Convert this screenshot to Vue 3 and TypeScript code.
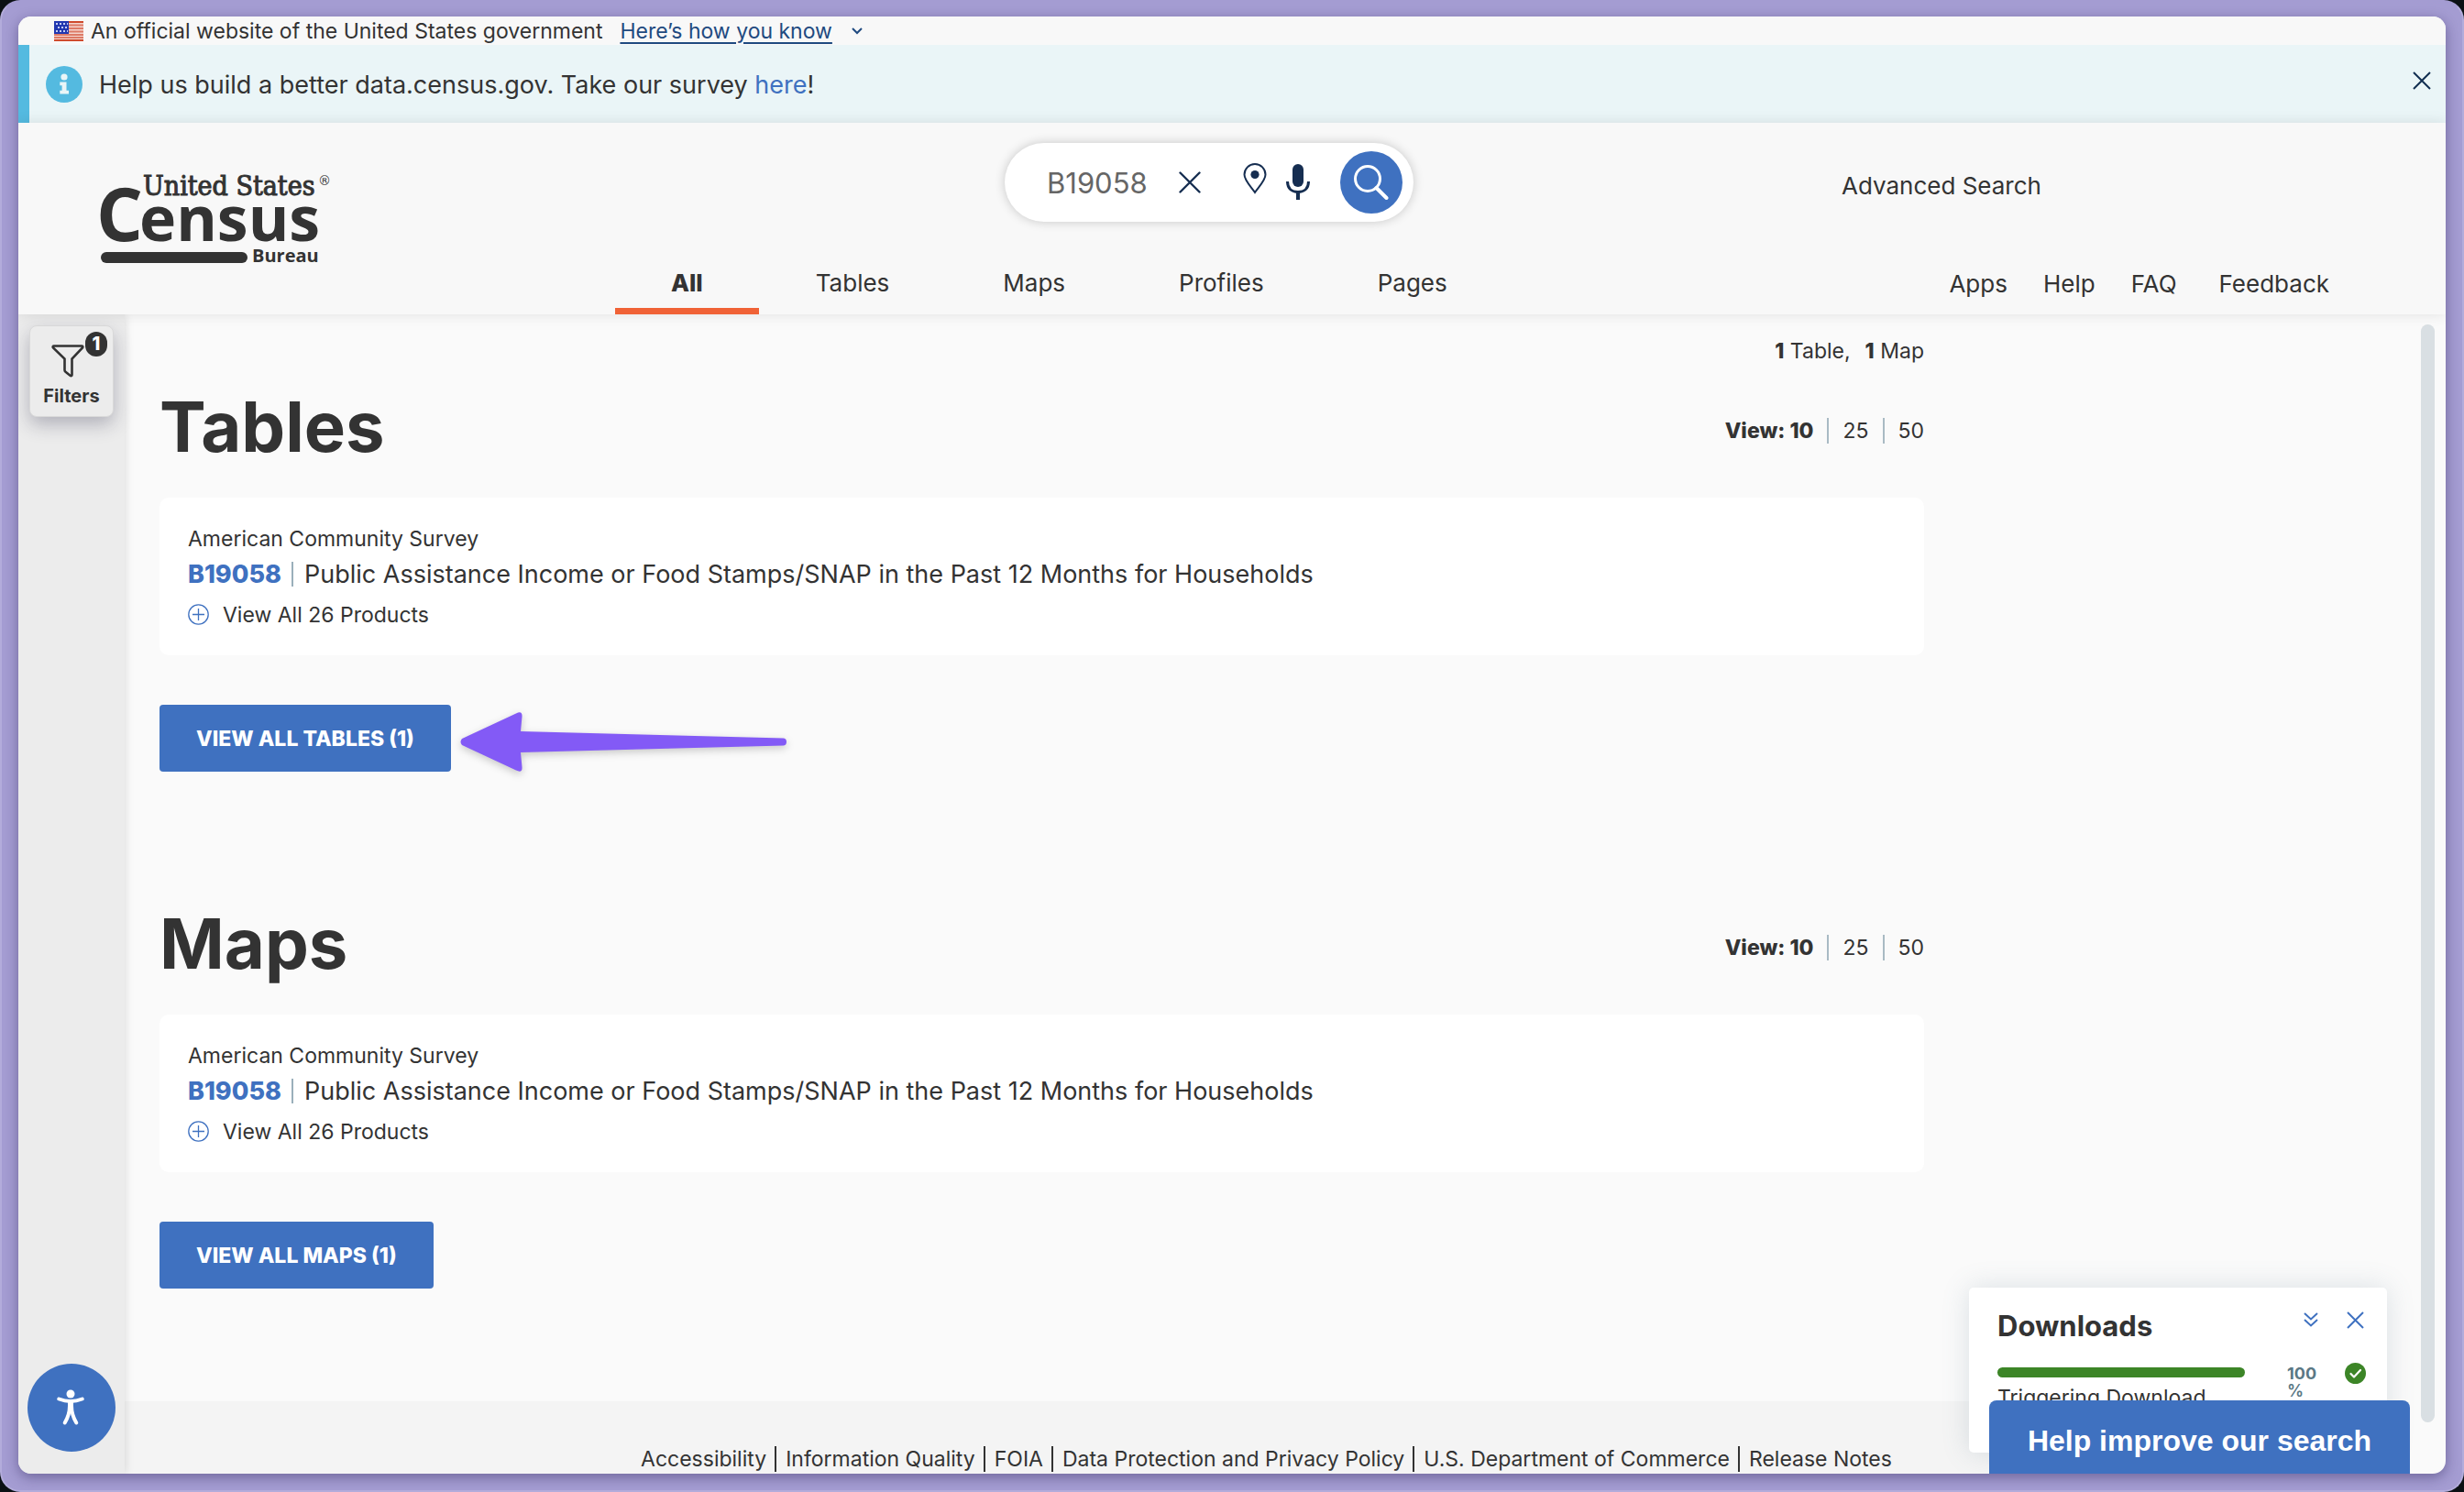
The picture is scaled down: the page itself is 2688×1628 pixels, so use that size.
<script setup lang="ts">
import { ref } from 'vue'

interface ResultSection {
  id: string
  title: string
  action: string
  annotated: boolean
}

const tabs: string[] = ['All', 'Tables', 'Maps', 'Profiles', 'Pages']
const utilityLinks: string[] = ['Apps', 'Help', 'FAQ', 'Feedback']
const pageSizes: number[] = [25, 50]
const footerLinks: string[] = [
  'Accessibility',
  'Information Quality',
  'FOIA',
  'Data Protection and Privacy Policy',
  'U.S. Department of Commerce',
  'Release Notes',
]
const sections: ResultSection[] = [
  { id: 'tables', title: 'Tables', action: 'VIEW ALL TABLES (1)', annotated: true },
  { id: 'maps', title: 'Maps', action: 'VIEW ALL MAPS (1)', annotated: false },
]

const activeTab = ref('All')
const query = ref('B19058')
const progress = ref(100)
</script>

<template>
  <div class="desktop">
    <div class="window">
      <div class="gov-banner">
        <svg class="flag" viewBox="0 0 32 22" aria-hidden="true">
          <rect width="32" height="22" fill="#f5d5cd" />
          <path d="M0 1h32M0 4.5h32M0 8h32M0 11.5h32M0 15h32M0 18h32" stroke="#dd7a66" stroke-width="1.8" />
          <path d="M0 1h32M0 21h32" stroke="#cf4a2c" stroke-width="2" />
          <rect width="16" height="14" fill="#2138b0" />
          <path d="M2 3h13M4 7h11M2 11h13" stroke="#c5cdf2" stroke-width="2" stroke-dasharray="2 2" />
        </svg>
        <span>An official website of the United States government</span>
        <a href="#" class="gov-link">Here’s how you know</a>
        <svg class="gov-chevron" viewBox="0 0 12 8" aria-hidden="true">
          <path d="M1 1l5 5 5-5" fill="none" stroke="#1f4a80" stroke-width="2" />
        </svg>
      </div>

      <div class="alert" role="status">
        <svg class="alert-icon" viewBox="0 0 40 40" aria-hidden="true">
          <circle cx="20" cy="20" r="20" fill="#54bae0" />
          <circle cx="20" cy="12" r="3.6" fill="#eaf5f7" />
          <path d="M15.300 17.500h7.200v9.300h2.500v3.700h-9.700v-3.700h2.300v-5.600h-2.300z" fill="#eaf5f7" />
        </svg>
        <p>Help us build a better data.census.gov. Take our survey <a href="#">here</a>!</p>
        <button type="button" class="icon-button" aria-label="Dismiss">
          <svg width="20" height="20" viewBox="0 0 20 20">
            <path d="M1 1l18 18M19 1L1 19" stroke="#112e51" stroke-width="2" />
          </svg>
        </button>
      </div>

      <header class="header">
        <a href="#" class="logo" aria-label="United States Census Bureau">
          <svg width="252" height="100" viewBox="0 0 252 100" fill="#333">
            <text x="48" y="25" class="logo-top">United States</text>
            <text x="239" y="14" class="logo-mark">®</text>
            <text x="-3" y="75" class="logo-initial">C</text>
            <text x="44" y="75" class="logo-name">ensus</text>
            <rect x="2" y="87" width="160" height="12" rx="6" />
            <text x="167" y="98" class="logo-bureau">Bureau</text>
          </svg>
        </a>

        <form class="search" role="search" @submit.prevent>
          <input v-model="query" type="text" class="search-input" aria-label="Search" />
          <button type="button" class="icon-button clear" aria-label="Clear" @click="query = ''">
            <svg width="24" height="24" viewBox="0 0 24 24">
              <path d="M1.500 1.500l21 21M22.500 1.500l-21 21" stroke="#162e51" stroke-width="2.400" stroke-linecap="round" />
            </svg>
          </button>
          <button type="button" class="icon-button pin" aria-label="Location">
            <svg width="26" height="34" viewBox="0 0 26 34">
              <path d="M13 32C9.500 26.500 1.500 19 1.500 12.500a11.500 11.500 0 0 1 23 0C24.500 19 16.500 26.500 13 32z" fill="none" stroke="#162e51" stroke-width="2" />
              <circle cx="13" cy="12.500" r="4.600" fill="#162e51" />
            </svg>
          </button>
          <button type="button" class="icon-button mic" aria-label="Voice search">
            <svg width="26" height="40" viewBox="0 0 26 40">
              <rect x="7" y="0" width="12" height="25" rx="6" fill="#162e51" />
              <path d="M1.500 19c0 8 5 11.500 11.500 11.500S24.500 27 24.500 19" fill="none" stroke="#162e51" stroke-width="3" />
              <path d="M13 30v9" stroke="#162e51" stroke-width="4" />
            </svg>
          </button>
          <button type="submit" class="search-submit" aria-label="Search">
            <svg width="38" height="38" viewBox="0 0 38 38" fill="none" stroke="#fff">
              <circle cx="15" cy="15" r="13.500" stroke-width="3" />
              <path d="M24.500 25l11 11" stroke-width="4" stroke-linecap="round" />
            </svg>
          </button>
        </form>

        <a href="#" class="advanced">Advanced Search</a>

        <nav class="tabs" aria-label="Result types">
          <button
            v-for="tab in tabs"
            :key="tab"
            type="button"
            class="tab"
            :class="{ active: tab === activeTab }"
            @click="activeTab = tab"
          >
            {{ tab }}
          </button>
        </nav>

        <nav class="utility" aria-label="Utility">
          <a v-for="link in utilityLinks" :key="link" href="#">{{ link }}</a>
        </nav>
      </header>

      <div class="body">
        <aside class="sidebar">
          <button type="button" class="filters">
            <svg width="36" height="36" viewBox="0 0 36 36" aria-hidden="true">
              <path
                d="M2.500 1.500h31c1 0 1 1.200.500 2L22.500 15.500v17.500c0 1.200-1 1.500-2 .800l-5-4c-.800-.600-1-1.200-1-2V15.500L2 3.500c-.600-.800-.500-2 .500-2z"
                fill="none"
                stroke="#333"
                stroke-width="2.600"
              />
            </svg>
            <span>Filters</span>
            <span class="badge">1</span>
          </button>
          <button type="button" class="a11y" aria-label="Accessibility options">
            <svg width="30" height="40" viewBox="0 0 30 40" fill="none" stroke="#fff" stroke-linecap="round" stroke-linejoin="round">
              <circle cx="15" cy="5" r="4.500" fill="#fff" stroke="none" />
              <path d="M2.300 10.500c8 3 17.400 3 25.400 0" stroke-width="4" />
              <path d="M15 14v10" stroke-width="6" stroke-linecap="butt" />
              <path d="M14 18c0 8-2 13-5.300 18.500M16 18c0 8 2 13 5.300 18.500" stroke-width="4" />
            </svg>
          </button>
        </aside>

        <div class="content">
          <main class="results">
            <p class="counts"><span><b>1</b> Table,</span><span><b>1</b> Map</span></p>

            <section v-for="section in sections" :key="section.id" class="section">
              <div class="section-head">
                <h2>{{ section.title }}</h2>
                <div class="page-size">
                  <b>View: 10</b>
                  <a v-for="size in pageSizes" :key="size" href="#">{{ size }}</a>
                </div>
              </div>
              <article class="card">
                <p class="survey">American Community Survey</p>
                <h3>
                  <a href="#">B19058</a>
                  <span>Public Assistance Income or Food Stamps/SNAP in the Past 12 Months for Households</span>
                </h3>
                <button type="button" class="products">
                  <svg width="23" height="23" viewBox="0 0 23 23" fill="none" stroke="#3f71c0" stroke-width="1.300" aria-hidden="true">
                    <circle cx="11.500" cy="11.500" r="10.700" />
                    <path d="M11.500 5v13M5 11.500h13" />
                  </svg>
                  View All 26 Products
                </button>
              </article>
              <div class="action-row">
                <button type="button" class="view-all">{{ section.action }}</button>
                <svg v-if="section.annotated" class="arrow" viewBox="0 0 358 72" aria-hidden="true">
                  <path
                    d="M3 36 Q0 39.500 3 43 L62 70.500 Q69 74 68.500 67 L67 51 L354 43.500 Q357 43 357 39.500 Q357 36 354 35.500 L67 28 L68.500 12 Q69 5 62 8.500 Z"
                    fill="#835af6"
                  />
                </svg>
              </div>
            </section>
          </main>

          <footer class="footer">
            <a v-for="link in footerLinks" :key="link" href="#">{{ link }}</a>
          </footer>
        </div>

        <div class="scroll-track"><div class="scroll-thumb"></div></div>
      </div>

      <section class="downloads" aria-label="Downloads">
        <div class="downloads-head">
          <h4>Downloads</h4>
          <button type="button" class="icon-button" aria-label="Collapse">
            <svg width="16" height="16" viewBox="0 0 16 16" fill="none" stroke="#3f71c0" stroke-width="2">
              <path d="M1 1l7 6.500L15 1M1 8l7 6.500L15 8" />
            </svg>
          </button>
          <button type="button" class="icon-button" aria-label="Close">
            <svg width="19" height="19" viewBox="0 0 19 19">
              <path d="M1 1l17 17M18 1L1 18" stroke="#3f71c0" stroke-width="2" />
            </svg>
          </button>
        </div>
        <div class="downloads-row">
          <div class="download-item">
            <div class="bar"><div class="bar-fill" :style="{ width: progress + '%' }"></div></div>
            <span>Triggering Download</span>
          </div>
          <div class="percent"><b>{{ progress }}</b> %</div>
          <svg width="23" height="23" viewBox="0 0 23 23" aria-hidden="true">
            <circle cx="11.500" cy="11.500" r="11.500" fill="#3c8527" />
            <path d="M6.500 12l3.500 3.500 7-7.500" fill="none" stroke="#fff" stroke-width="2.200" stroke-linecap="round" stroke-linejoin="round" />
          </svg>
        </div>
      </section>
      <button type="button" class="improve">Help improve our search</button>
    </div>
  </div>
</template>

<style>
body {
  background: #0b1014;
}
</style>

<style scoped>
.desktop {
  box-sizing: border-box;
  height: 100vh;
  padding: 16px 18px 18px;
  border: 2px solid #b3acdb;
  border-top-color: #a49cd2;
  border-radius: 22px;
  background: #a49cd2;
  font-family: Inter, "Liberation Sans", sans-serif;
  font-size: 23px;
  color: #333;
}
.desktop *,
.desktop *::before {
  box-sizing: border-box;
}
.window {
  position: relative;
  display: flex;
  flex-direction: column;
  height: 100%;
  overflow: hidden;
  border-radius: 14px;
  background: #fafafa;
  box-shadow: 0 4px 14px rgba(30, 20, 70, 0.4);
}
p,
h2,
h3,
h4 {
  margin: 0;
}
a {
  color: inherit;
  text-decoration: none;
}
button {
  padding: 0;
  border: 0;
  background: none;
  color: inherit;
  font: inherit;
  cursor: pointer;
}
.icon-button {
  display: flex;
}

.gov-banner {
  display: flex;
  align-items: center;
  height: 31px;
  padding-left: 39px;
  background: #f8f8f8;
}
.flag {
  width: 32px;
  height: 22px;
  margin-right: 8px;
}
.gov-link {
  margin: 0 21px 0 19px;
  color: #1f4a80;
  text-decoration: underline;
  text-decoration-thickness: 2px;
  text-underline-offset: 4px;
}
.gov-chevron {
  width: 12px;
  height: 8px;
}

.alert {
  display: flex;
  align-items: center;
  height: 85px;
  padding: 0 16px 0 18px;
  border-left: 12px solid #54bae0;
  background: #eaf5f7;
  font-size: 27px;
}
.alert-icon {
  width: 40px;
  height: 40px;
  margin-right: 18px;
}
.alert p {
  flex: 1;
  padding-top: 2px;
}
.alert a {
  color: #3f71c0;
}
.alert .icon-button {
  padding-bottom: 8px;
}

.header {
  position: relative;
  z-index: 1;
  display: grid;
  grid-template-columns: 651fr 1296fr 701fr;
  grid-template-rows: 86px 70px;
  row-gap: 31px;
  padding-top: 22px;
  background: #f8f8f8;
  box-shadow: 0 0 14px rgba(0, 0, 0, 0.1);
  font-size: 26px;
}
.logo {
  grid-row: 1 / 3;
  padding: 32px 0 0 88px;
}
.logo svg {
  display: block;
  overflow: visible;
}
.logo-top {
  font: 30px "DejaVu Serif Condensed", "DejaVu Serif", serif;
  stroke: #333;
  stroke-width: 1px;
}
.logo-mark {
  font: 14px "DejaVu Sans", sans-serif;
}
.logo-initial {
  font: bold 80px "Open Sans", sans-serif;
}
.logo-name {
  font: bold 68px "Open Sans", sans-serif;
}
.logo-bureau {
  font: bold 20px "Open Sans", sans-serif;
}
.search {
  display: flex;
  align-items: center;
  justify-self: center;
  width: 446px;
  padding: 0 12px 0 46px;
  border-radius: 43px;
  background: #fff;
  box-shadow: 0 0 12px rgba(0, 0, 0, 0.2);
}
.search-input {
  flex: 1;
  min-width: 0;
  padding: 0;
  border: 0;
  outline: 0;
  background: none;
  color: #666;
  font: 31px Inter, sans-serif;
}
.clear {
  margin-right: 46px;
}
.pin {
  margin-right: 21px;
  padding-bottom: 8px;
}
.mic {
  margin-right: 33px;
}
.search-submit {
  display: flex;
  align-items: center;
  justify-content: center;
  width: 68px;
  height: 68px;
  border-radius: 50%;
  background: #3f71c0;
}
.advanced {
  align-self: center;
  padding: 6px 0 0 42px;
}
.tabs {
  display: flex;
}
.tab {
  position: relative;
  padding: 0 62px;
}
.tab.active {
  padding: 0 61px;
  font-weight: 800;
}
.tab.active::before {
  content: "";
  position: absolute;
  right: 0;
  bottom: 0;
  left: 0;
  height: 7px;
  background: #f06236;
}
.utility {
  display: flex;
  align-items: center;
  justify-content: flex-end;
  gap: 39px;
  padding: 2px 127px 0 0;
}
.utility a:last-child {
  padding-left: 7px;
}

.body {
  display: flex;
  flex: 1;
  min-height: 0;
}
.sidebar {
  position: relative;
  display: flex;
  flex-direction: column;
  justify-content: space-between;
  width: 116px;
  padding: 12px 10px 24px;
  background: #ececec;
  box-shadow: 0 0 10px rgba(0, 0, 0, 0.14);
}
.filters {
  position: relative;
  display: flex;
  flex-direction: column;
  align-items: center;
  gap: 10px;
  width: 92px;
  height: 100px;
  margin-left: 2px;
  padding: 20px 8px 0 0;
  border: 1px solid #d9d9d9;
  border-radius: 8px;
  background: #ececec;
  box-shadow: 0 8px 20px rgba(40, 40, 70, 0.3);
  font-size: 20px;
  font-weight: 700;
}
.filters > span:not(.badge) {
  padding-left: 8px;
  line-height: 20px;
}
.badge {
  position: absolute;
  top: 6px;
  right: 6px;
  width: 24px;
  border-radius: 12px;
  background: #333;
  color: #fff;
  line-height: 27px;
  font-weight: 800;
}
.a11y {
  display: flex;
  align-items: center;
  justify-content: center;
  width: 96px;
  height: 96px;
  padding-right: 3px;
  border-radius: 50%;
  background: #3f71c0;
}

.content {
  display: flex;
  flex: 1;
  flex-direction: column;
  min-width: 0;
}
.results {
  max-width: 1963px;
  padding: 24px 0 0 38px;
}
.counts {
  display: flex;
  justify-content: flex-end;
  gap: 16px;
  margin-bottom: 18px;
  line-height: 32px;
}
.section {
  margin-bottom: 139px;
}
.section:last-child {
  margin-bottom: 123px;
}
.section-head {
  display: flex;
  align-items: center;
  justify-content: space-between;
  margin-bottom: 30px;
}
.section-head h2 {
  font-size: 76px;
  font-weight: 700;
  line-height: 96px;
}
.page-size {
  display: flex;
  padding-top: 10px;
  line-height: 28px;
}
.page-size b,
.counts b {
  font-weight: 800;
}
.page-size a {
  margin-left: 15px;
  padding-left: 15px;
  border-left: 2px solid #a9bac4;
}
.card {
  padding: 29px 31px 23px;
  border-radius: 10px;
  background: #fff;
}
.survey {
  line-height: 32px;
}
.card h3 {
  display: flex;
  align-items: center;
  height: 44px;
  font-size: 27px;
  font-weight: 400;
}
.card h3 a {
  color: #3f71c0;
  font-weight: 800;
}
.card h3 span {
  margin-left: 11px;
  padding-left: 12px;
  border-left: 2px solid #9aafbb;
  line-height: 27px;
}
.products {
  display: flex;
  align-items: center;
  gap: 15px;
  height: 44px;
  padding-top: 1px;
}
.action-row {
  display: flex;
  align-items: center;
  gap: 9px;
  margin-top: 54px;
}
.view-all {
  height: 73px;
  padding: 0 40px;
  border-radius: 4px;
  background: #3f71c0;
  color: #fff;
  font-weight: 800;
}
.arrow {
  width: 358px;
  height: 72px;
  overflow: visible;
  filter: drop-shadow(0 3px 4px rgba(0, 0, 0, 0.2));
}

.footer {
  display: flex;
  flex: 1;
  align-items: flex-start;
  justify-content: center;
  padding-top: 49px;
  background: #f4f4f4;
}
.footer a {
  line-height: 28px;
}
.footer a + a {
  margin-left: 9px;
  padding-left: 10px;
  border-left: 2px solid #333;
}

.scroll-track {
  display: flex;
  width: 41px;
  padding: 11px 12px 56px 14px;
}
.scroll-thumb {
  flex: 1;
  border-radius: 8px;
  background: #d9dfe3;
}

.downloads {
  position: absolute;
  right: 64px;
  bottom: 23px;
  width: 456px;
  height: 180px;
  padding: 20px 23px 0 31px;
  border-radius: 5px;
  background: #fff;
  box-shadow: 0 0 30px rgba(90, 120, 140, 0.2);
}
.downloads-head {
  display: flex;
  height: 44px;
  margin-bottom: 18px;
}
.downloads-head h4 {
  flex: 1;
  font-size: 31px;
  font-weight: 700;
  line-height: 44px;
}
.downloads-head .icon-button {
  height: 30px;
  align-items: center;
  margin-right: 2px;
}
.downloads-head .icon-button + .icon-button {
  margin-left: 29px;
}
.downloads-row {
  display: flex;
  align-items: flex-start;
}
.download-item {
  width: 270px;
  padding-top: 5px;
  line-height: 44px;
}
.bar {
  height: 11px;
}
.bar-fill {
  height: 100%;
  border-radius: 6px;
  background: #3c8527;
}
.percent {
  width: 34px;
  margin: 2px auto 0 46px;
  color: #5b7885;
  font-size: 18px;
  font-weight: 600;
  line-height: 19px;
}
.percent b {
  font-weight: 700;
}
.improve {
  position: absolute;
  right: 39px;
  bottom: 0;
  width: 459px;
  height: 80px;
  padding-top: 8px;
  border-radius: 8px 8px 0 0;
  background: #3f71c0;
  color: #fff;
  font: bold 32px "Liberation Sans", Arial, sans-serif;
}
</style>
